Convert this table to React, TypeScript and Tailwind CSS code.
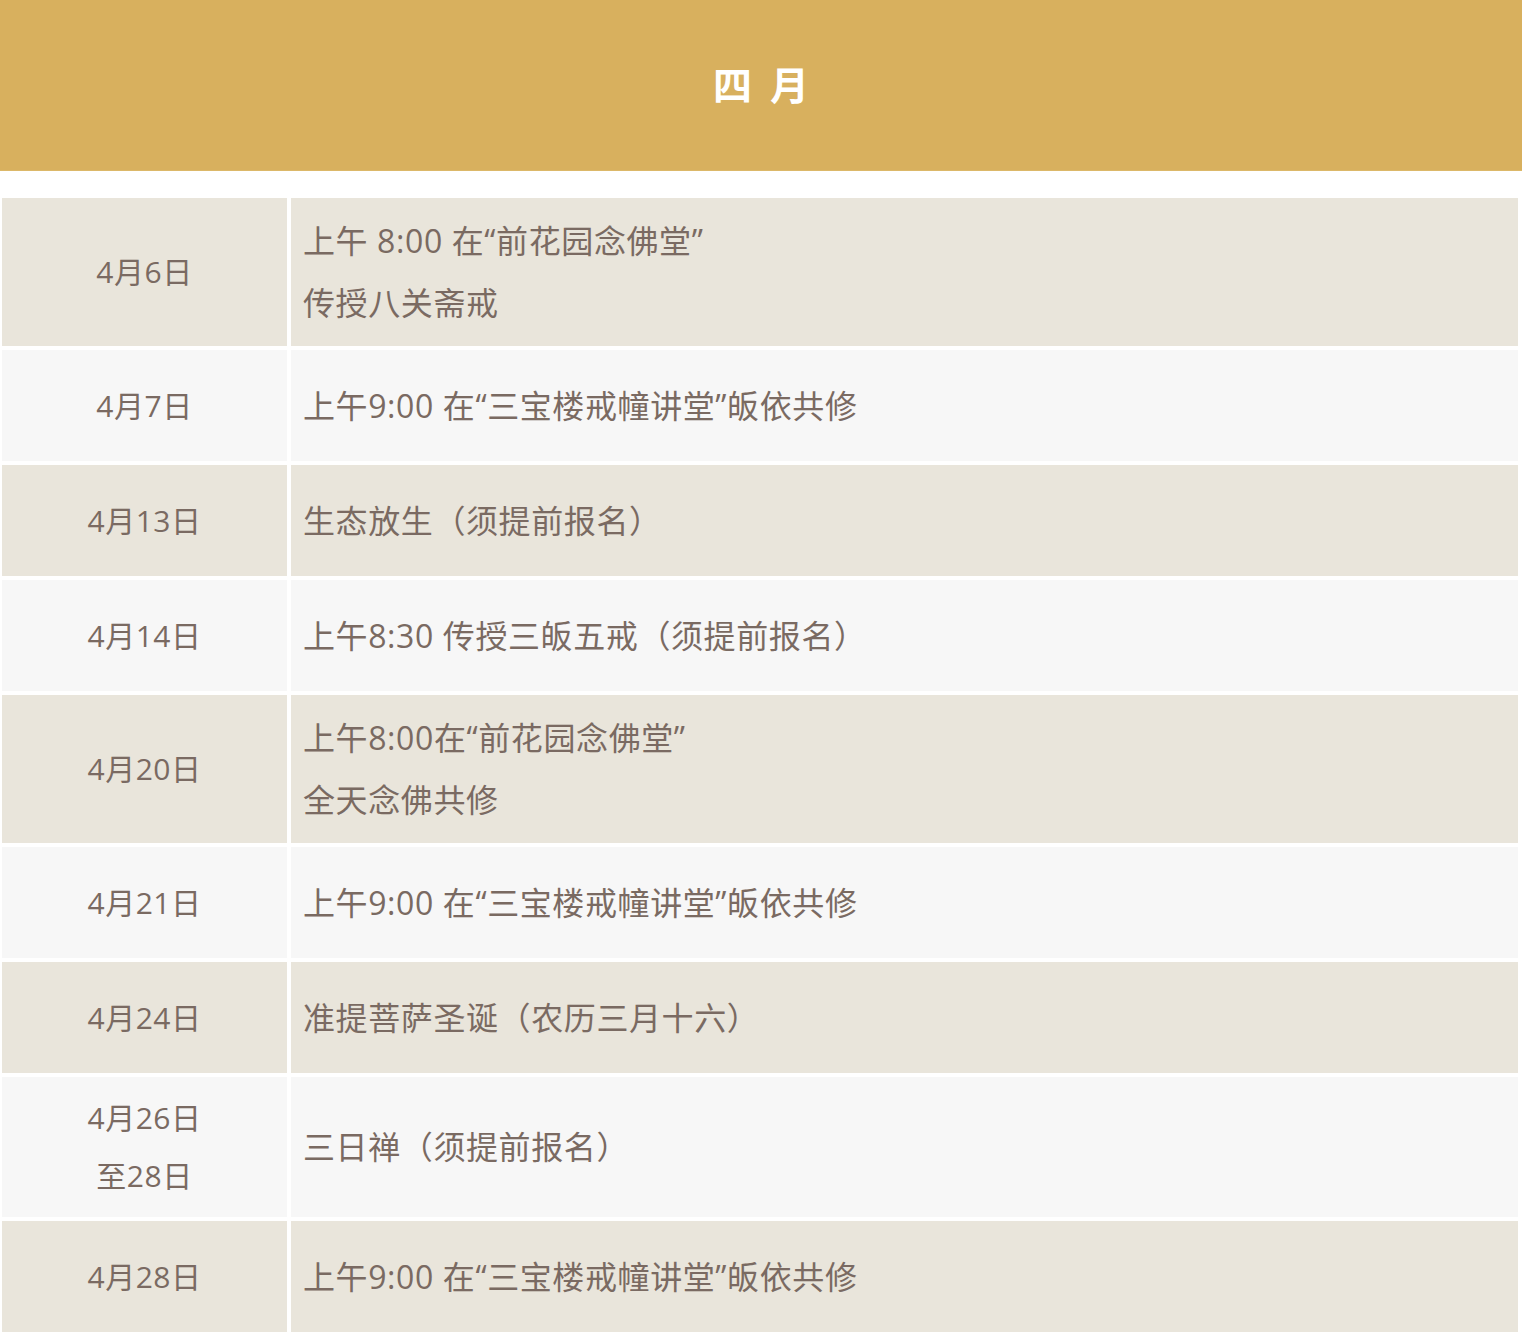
import React from "react";

type Row = { date: string[]; lines: string[]; bg: string };

const rows: Row[] = [
  { date: ["4月6日"], lines: ["上午 8:00 在“前花园念佛堂”", "传授八关斋戒"], bg: "bg-[#e9e5db]" },
  { date: ["4月7日"], lines: ["上午9:00 在“三宝楼戒幢讲堂”皈依共修"], bg: "bg-[#f7f7f7]" },
  { date: ["4月13日"], lines: ["生态放生（须提前报名）"], bg: "bg-[#e9e5db]" },
  { date: ["4月14日"], lines: ["上午8:30 传授三皈五戒（须提前报名）"], bg: "bg-[#f7f7f7]" },
  { date: ["4月20日"], lines: ["上午8:00在“前花园念佛堂”", "全天念佛共修"], bg: "bg-[#e9e5db]" },
  { date: ["4月21日"], lines: ["上午9:00 在“三宝楼戒幢讲堂”皈依共修"], bg: "bg-[#f7f7f7]" },
  { date: ["4月24日"], lines: ["准提菩萨圣诞（农历三月十六）"], bg: "bg-[#e9e5db]" },
  { date: ["4月26日", "至28日"], lines: ["三日禅（须提前报名）"], bg: "bg-[#f7f7f7]" },
  { date: ["4月28日"], lines: ["上午9:00 在“三宝楼戒幢讲堂”皈依共修"], bg: "bg-[#e9e5db]" },
];

export default function App() {
  return (
    <div
      className="w-[1522px] bg-white"
      style={{ fontFamily: '"Open Sans", "Noto Sans CJK SC", sans-serif' }}
    >
      <div className="h-[171px] bg-[#d8b05e] border-b border-[#dcb869] flex items-center justify-center">
        <h1 className="text-white font-bold text-[39px] tracking-[18px] pl-[18px] leading-none mt-[-4px]" style={{ fontFamily: '"Noto Sans CJK SC", sans-serif' }}>
          四月
        </h1>
      </div>
      <div className="pt-[27px] px-[2px] pr-[4px] flex flex-col gap-[4px]">
        {rows.map((r, i) => (
          <div key={i} className="flex gap-[4px] min-h-[111px]">
            <div
              className={`${r.bg} w-[285px] shrink-0 flex flex-col items-center justify-center py-[12px] text-[30px] leading-[58px] tracking-[0.5px] text-[#7a6a62]`}
            >
              {r.date.map((d, j) => (
                <div key={j}>{d}</div>
              ))}
            </div>
            <div
              className={`${r.bg} flex-1 flex flex-col justify-center py-[12px] pl-[12px] text-[32px] leading-[62px] tracking-[0.6px] text-[#7a6a62]`}
            >
              {r.lines.map((l, j) => (
                <div key={j}>{l}</div>
              ))}
            </div>
          </div>
        ))}
      </div>
    </div>
  );
}
